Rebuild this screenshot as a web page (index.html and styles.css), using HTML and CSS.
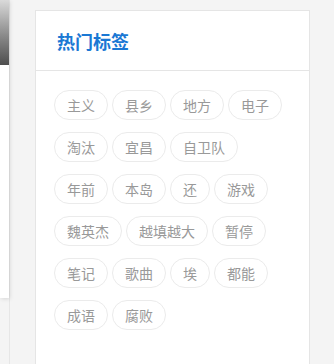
FILE: index.html
```html
<!DOCTYPE html>
<html lang="zh-CN">
<head>
  <meta charset="UTF-8" />
  <meta name="viewport" content="width=device-width, initial-scale=1.0" />
  <title>热门标签</title>
  <link rel="stylesheet" href="styles.css">
</head>
<body>
  <div class="page">
    <div class="side">
      <div class="side-card">
        <div class="side-cover"></div>
      </div>
    </div>
    <div class="panel">
      <div class="panel-head">
        <h3>热门标签</h3>
      </div>
      <div class="tags">
        <a class="tag" href="#">主义</a>
        <a class="tag" href="#">县乡</a>
        <a class="tag" href="#">地方</a>
        <a class="tag" href="#">电子</a>
        <a class="tag" href="#">淘汰</a>
        <a class="tag" href="#">宜昌</a>
        <a class="tag" href="#">自卫队</a>
        <a class="tag" href="#">年前</a>
        <a class="tag" href="#">本岛</a>
        <a class="tag" href="#">还</a>
        <a class="tag" href="#">游戏</a>
        <a class="tag" href="#">魏英杰</a>
        <a class="tag" href="#">越填越大</a>
        <a class="tag" href="#">暂停</a>
        <a class="tag" href="#">笔记</a>
        <a class="tag" href="#">歌曲</a>
        <a class="tag" href="#">埃</a>
        <a class="tag" href="#">都能</a>
        <a class="tag" href="#">成语</a>
        <a class="tag" href="#">腐败</a>
      </div>
    </div>
  </div>
</body>
</html>
```

FILE: styles.css
```css
* {
  box-sizing: border-box;
  margin: 0;
  padding: 0;
}
body {
  font-family: "Noto Sans CJK SC", "Noto Sans", sans-serif;
  background: #f4f4f4;
  color: #999;
  height: 364px;
  overflow: hidden;
}
.page {
  display: flex;
  gap: 25px;
  align-items: flex-start;
}
.side {
  width: 10px;
  height: 364px;
  border-right: 1px solid #e6e6e6;
}
.side-card {
  width: 9px;
  height: 298px;
  background: #fff;
  box-shadow: 1px 1px 4px rgba(0, 0, 0, 0.12);
}
.side-cover {
  height: 65px;
  background: linear-gradient(180deg, #dadada, #8a8a8a 55%, #4e4e4e);
}
.panel {
  width: 275px;
  margin-top: 10px;
  min-height: 360px;
  background: #fff;
  border: 1px solid #e5e5e5;
}
.panel-head {
  height: 60px;
  padding: 0 21px;
  display: flex;
  align-items: center;
  border-bottom: 1px solid #e5e5e5;
}
.panel-head h3 {
  font-size: 18px;
  font-weight: 700;
  color: #1a78d4;
}
.tags {
  display: flex;
  flex-wrap: wrap;
  gap: 12px 4px;
  padding: 19px 18px;
}
.tag {
  display: block;
  height: 30px;
  line-height: 28px;
  padding: 0 12px;
  border: 1px solid #ebebeb;
  border-radius: 15px;
  font-size: 14px;
  color: #999;
  text-decoration: none;
}
```
